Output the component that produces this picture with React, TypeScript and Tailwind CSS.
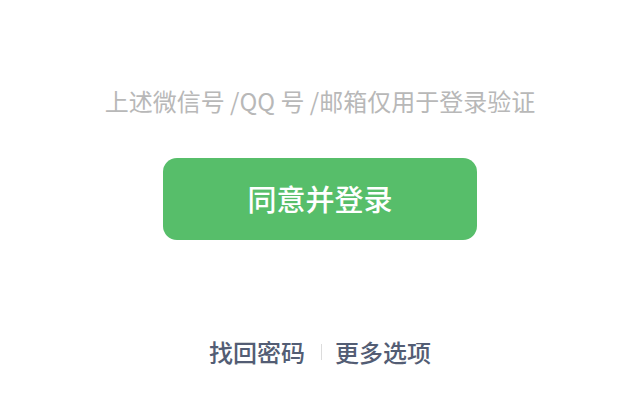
import React from 'react';

const font = { fontFamily: '"Noto Sans CJK SC", "Noto Sans", sans-serif' };

export default function App() {
  return (
    <div className="w-[640px] h-[411px] bg-white flex flex-col items-center" style={font}>
      <p className="mt-[85px] text-[24px] leading-[32px] text-[#b8b8b8] font-normal">
        上述微信号 /QQ 号 /邮箱仅用于登录验证
      </p>
      <button className="mt-[41px] w-[314px] h-[82px] rounded-[14px] bg-[#57be6a] text-white text-[29px] font-medium flex items-center justify-center">
        同意并登录
      </button>
      <div className="mt-[96px] flex items-center text-[24px] leading-[32px] font-medium text-[#535d74]">
        <span>找回密码</span>
        <span className="ml-[16px] mr-[13px] w-px h-[16px] bg-[#dcdcdc]" />
        <span>更多选项</span>
      </div>
    </div>
  );
}
